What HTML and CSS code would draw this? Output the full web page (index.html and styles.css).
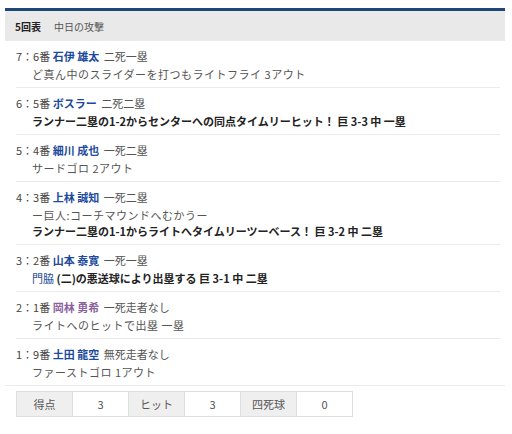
FILE: index.html
```html
<!DOCTYPE html>
<html lang="ja">
<head>
<meta charset="utf-8">
<link rel="stylesheet" href="styles.css">
</head>
<body>
<div class="wrap">
  <div class="inning-head">
    <span class="inning">5回表</span>
    <span class="team">中日の攻撃</span>
  </div>
  <ul class="plays">
    <li class="play">
      <div class="batter"><span class="num">7：6番</span> <a class="name">石伊 雄太</a> <span class="state">二死一塁</span></div>
      <div class="descs">
        <div class="desc">ど真ん中のスライダーを打つもライトフライ 3アウト</div>
      </div>
    </li>
    <li class="play">
      <div class="batter"><span class="num">6：5番</span> <a class="name">ボスラー</a> <span class="state">二死二塁</span></div>
      <div class="descs">
        <div class="desc strong">ランナー二塁の1-2からセンターへの同点タイムリーヒット！ 巨 3-3 中 一塁</div>
      </div>
    </li>
    <li class="play">
      <div class="batter"><span class="num">5：4番</span> <a class="name">細川 成也</a> <span class="state">一死二塁</span></div>
      <div class="descs">
        <div class="desc">サードゴロ 2アウト</div>
      </div>
    </li>
    <li class="play">
      <div class="batter"><span class="num">4：3番</span> <a class="name">上林 誠知</a> <span class="state">一死二塁</span></div>
      <div class="descs">
        <div class="desc">ー巨人:コーチマウンドへむかうー</div>
        <div class="desc strong">ランナー二塁の1-1からライトへタイムリーツーベース！ 巨 3-2 中 二塁</div>
      </div>
    </li>
    <li class="play">
      <div class="batter"><span class="num">3：2番</span> <a class="name">山本 泰寛</a> <span class="state">一死一塁</span></div>
      <div class="descs">
        <div class="desc strong"><a class="link">門脇</a> (二)の悪送球により出塁する 巨 3-1 中 二塁</div>
      </div>
    </li>
    <li class="play">
      <div class="batter"><span class="num">2：1番</span> <a class="name visited">岡林 勇希</a> <span class="state">一死走者なし</span></div>
      <div class="descs">
        <div class="desc">ライトへのヒットで出塁 一塁</div>
      </div>
    </li>
    <li class="play">
      <div class="batter"><span class="num">1：9番</span> <a class="name">土田 龍空</a> <span class="state">無死走者なし</span></div>
      <div class="descs">
        <div class="desc">ファーストゴロ 1アウト</div>
      </div>
    </li>
  </ul>
  <div class="summary">
    <table class="stats">
      <tr>
        <th>得点</th><td>3</td>
        <th>ヒット</th><td>3</td>
        <th>四死球</th><td>0</td>
      </tr>
    </table>
  </div>
</div>
</body>
</html>
```
FILE: styles.css
```css
html, body {
  margin: 0;
  padding: 0;
  background: #fff;
}
body {
  font-family: "Noto Sans CJK JP", "Noto Sans", sans-serif;
  font-size: 11px;
  color: #444;
}
.wrap {
  width: 500px;
  margin: 8px 0 0 5px;
}
.inning-head {
  border-top: 3px solid #1d4775;
  background: #e9e9e9;
  height: 30px;
  display: flex;
  align-items: center;
  gap: 13px;
  padding-left: 10px;
  font-size: 10px;
}
.inning {
  font-weight: bold;
  color: #222;
}
.team {
  color: #555;
}
.plays {
  list-style: none;
  margin: 0;
  padding: 0 5px 0 11px;
}
.play {
  padding: 7px 0 5px;
  border-bottom: 1px solid #ebebeb;
}
.play:last-child {
  border-bottom: none;
}
.batter {
  line-height: 17px;
}
.num {
  color: #444;
}
.name {
  color: #1c4a9c;
  font-weight: bold;
  text-decoration: none;
  margin-right: 2px;
}
.name.visited {
  color: #8c5f9f;
}
.state {
  color: #555;
}
.descs {
  margin-top: 1px;
  padding-left: 16px;
}
.desc {
  line-height: 16px;
  color: #555;
  letter-spacing: 0.5px;
}
.desc.strong {
  font-weight: bold;
  color: #222;
  letter-spacing: 0;
}
.link {
  color: #1c4a9c;
  font-weight: normal;
}
.summary {
  border-top: 1px solid #ebebeb;
  padding: 5px 0 0 11px;
}
.stats {
  border-collapse: collapse;
}
.stats th,
.stats td {
  width: 55px;
  height: 24px;
  padding: 0;
  border: 1px solid #dedede;
  text-align: center;
  font-weight: normal;
  color: #555;
}
.stats th {
  background: #efefef;
}
.stats td {
  background: #fff;
}
```
